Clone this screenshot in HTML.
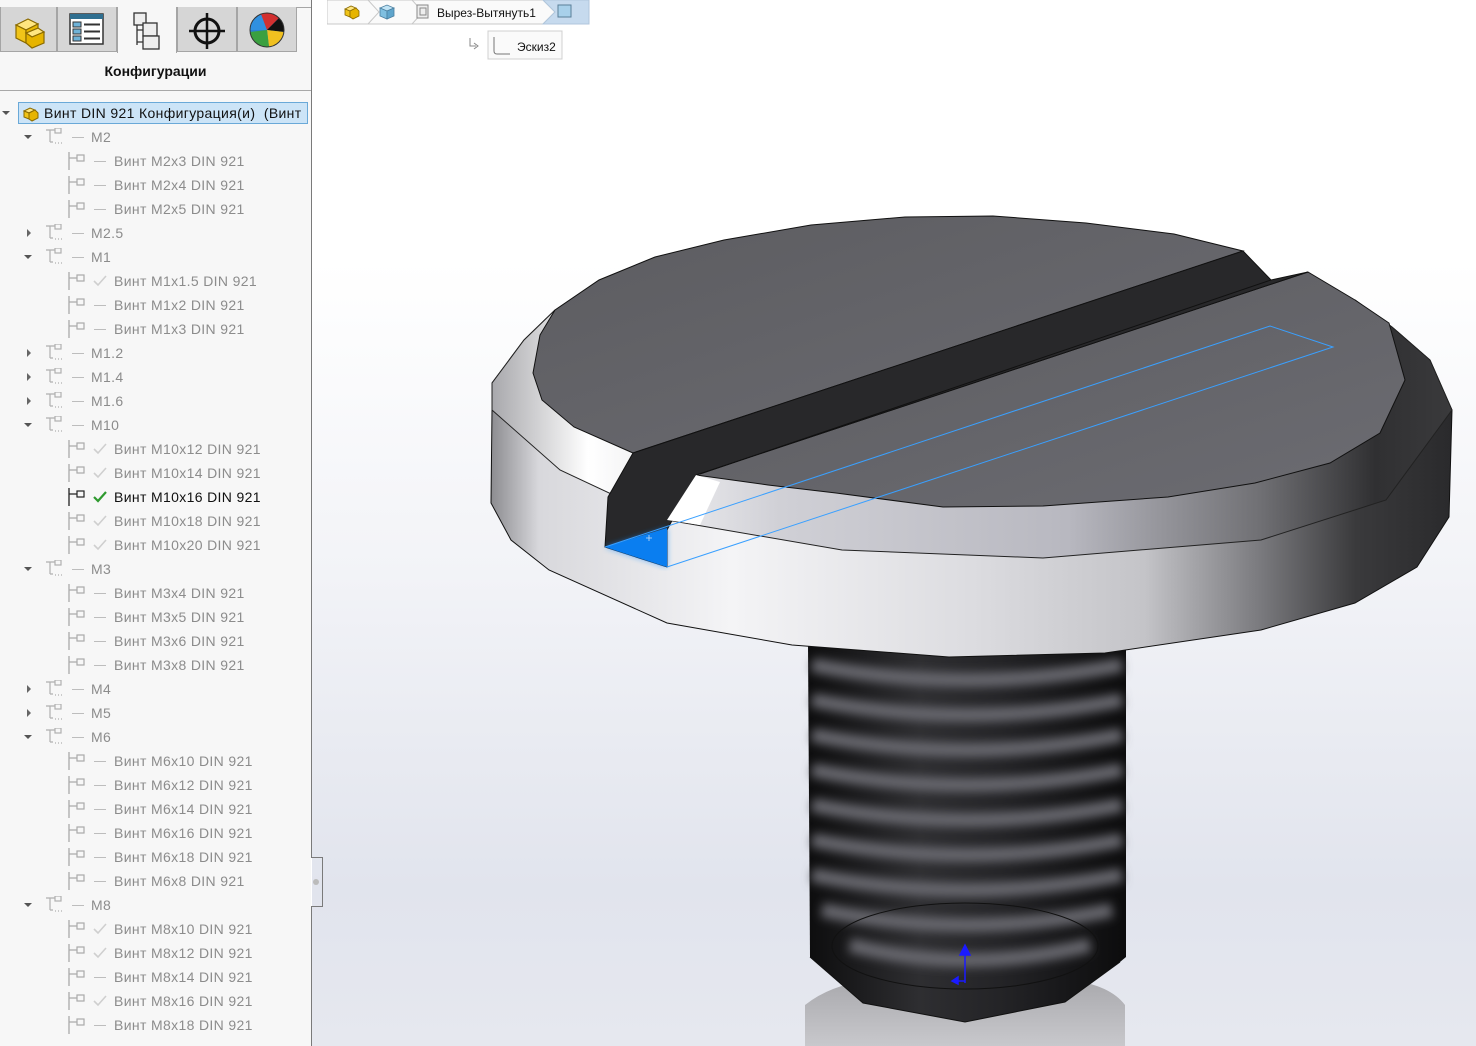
<!DOCTYPE html>
<html><head><meta charset="utf-8"><style>
*{margin:0;padding:0;box-sizing:border-box}
body{width:1476px;height:1046px;overflow:hidden;position:relative;font-family:"Liberation Sans","DejaVu Sans",sans-serif;background:#fff}
#vp{position:absolute;left:312px;top:0;width:1164px;height:1046px;background:linear-gradient(#ffffff 0%,#ffffff 25%,#f2f3f7 55%,#e1e4ed 85%,#e6e8ef 100%)}
#panel{position:absolute;left:0;top:0;width:311px;height:1046px;background:#f7f7f7}
.bl{position:absolute;background:#7a7a7a}
.tab{position:absolute;top:7px;height:45px;background:#d6d6d6;border:1px solid #a5a5a5;border-top:none}
.tab.act{background:#f7f7f7;border-bottom:none;height:46px}
.hdr{position:absolute;left:0;width:311px;top:63px;text-align:center;font-weight:bold;font-size:14px;color:#111}
.row{position:absolute;height:18px;line-height:18px;font-size:14px;color:#8c8c8c;white-space:nowrap;letter-spacing:0.35px}
.g{left:91px}.c{left:114px}
.arr{position:absolute;width:0;height:0}
.ad{border-left:4px solid transparent;border-right:4px solid transparent;border-top:4px solid #555}
.ar{border-top:4px solid transparent;border-bottom:4px solid transparent;border-left:4px solid #666}
.ic{position:absolute}
.dash{position:absolute;height:1px;width:12px;background:#bdbdbd}
</style></head><body>
<div id="vp"></div>
<div id="panel"></div>
<div class="bl" style="left:311px;top:0;width:1px;height:858px"></div>
<div class="bl" style="left:311px;top:857px;width:11px;height:1px"></div>
<div class="bl" style="left:322px;top:857px;width:1px;height:50px"></div>
<div class="bl" style="left:311px;top:906px;width:11px;height:1px"></div>
<div class="bl" style="left:311px;top:906px;width:1px;height:140px"></div>
<div style="position:absolute;left:313px;top:879px;width:6px;height:6px;border-radius:50%;background:#bbb"></div>
<div style="position:absolute;left:0;top:7px;width:311px;height:1px;background:#a5a5a5"></div>

<div class="tab" style="left:0;width:57px"></div>
<div class="tab" style="left:57px;width:60px"></div>
<div class="tab act" style="left:117px;width:60px"></div>
<div class="tab" style="left:177px;width:60px"></div>
<div class="tab" style="left:237px;width:60px"></div>
<svg style="position:absolute;left:0;top:7px" width="311" height="46">
 <g transform="translate(10,4)" stroke="#8a6a00" stroke-width="1.2">
  <polygon points="6,14 18,8 28,13 16,19" fill="#ffe680"/>
  <polygon points="6,14 16,19 16,32 6,27" fill="#f0c419"/>
  <polygon points="16,22 28,17 34,21 22,26" fill="#ffe680"/>
  <polygon points="16,19 28,13 28,17 16,22" fill="#e8b800"/>
  <polygon points="22,26 34,21 34,32 22,37 16,32 16,22" fill="#e6b400"/>
 </g>
 <g transform="translate(70,7)">
  <rect x="0" y="0" width="33" height="30" fill="#fff" stroke="#333" stroke-width="1.5"/>
  <rect x="0" y="0" width="33" height="5" fill="#2f6f90"/>
  <rect x="3" y="8" width="8" height="5" fill="#6fb3d8" stroke="#333"/><rect x="3" y="15" width="8" height="5" fill="#6fb3d8" stroke="#333"/><rect x="3" y="22" width="8" height="5" fill="#6fb3d8" stroke="#333"/>
  <path d="M14 10.5h16M14 17.5h16M14 24.5h16" stroke="#333" stroke-width="2"/>
 </g>
 <g transform="translate(133,5)" stroke="#333" stroke-width="1.3" fill="#eee">
  <rect x="1" y="1" width="12" height="12"/><path d="M4 13v20M4 18h6M4 30h6" fill="none"/>
  <rect x="10" y="11" width="14" height="13"/><rect x="10" y="24" width="16" height="13"/>
 </g>
 <g transform="translate(207,24)" stroke="#111" fill="none">
  <circle r="12" stroke-width="3"/><path d="M-18 0H18M0 -18V18" stroke-width="2.5"/>
 </g>
 <g transform="translate(267,23)">
  <circle r="17" fill="#2a7fd0"/>
  <path d="M0 0L-17 0A17 17 0 0 1 -6 -16Z" fill="#3090e0"/>
  <path d="M0 0L-6 -16A17 17 0 0 1 12 -12Z" fill="#d23030"/>
  <path d="M0 0L12 -12A17 17 0 0 1 17 2Z" fill="#111"/>
  <path d="M0 0L17 2A17 17 0 0 1 2 17Z" fill="#f0c020"/>
  <path d="M0 0L2 17A17 17 0 0 1 -17 2Z" fill="#3aa040"/>
  <circle r="17" fill="none" stroke="#333"/>
 </g>
</svg>
<div class="hdr">Конфигурации</div>
<div style="position:absolute;left:0;top:90px;width:311px;height:1px;background:#a8a8a8"></div>

<div style="position:absolute;left:18px;top:102px;width:290px;height:22px;background:#cce4f7;border:1px solid #6aa9d8"></div>
<div class="arr ad" style="left:2px;top:111px"></div>
<svg class="ic" style="left:22px;top:104px" width="18" height="18"><g stroke="#8a6a00" stroke-width="1"><polygon points="2,7 8,4 13,6 7,9" fill="#ffe680"/><polygon points="2,7 7,9 7,15 2,13" fill="#f0c419"/><polygon points="7,9 13,6 16,9 16,14 10,17 7,15" fill="#e6b400"/></g></svg>
<div class="row" style="left:44px;top:104px;color:#111">Винт DIN 921 Конфигурация(и)&nbsp; (Винт</div>

<div id="tree"></div>
<svg width="0" height="0" style="position:absolute"><defs>
<g id="gi" stroke="#b0b0b0" fill="none" stroke-width="1.2"><path d="M1 2h9M5 2v12M5 14h3"/><rect x="10" y="0" width="6" height="5"/><path d="M10 15h1M13 15h1M16 15h1"/></g>
<g id="ci"><path d="M1 0v18M1 6h8" stroke="currentColor" stroke-width="1.3" fill="none"/><rect x="9" y="3" width="7" height="6" fill="none" stroke="currentColor" stroke-width="1.2"/></g>
</defs></svg>
<script>
var R=[["g","M2",1],["c","Винт M2x3 DIN 921","-"],["c","Винт M2x4 DIN 921","-"],["c","Винт M2x5 DIN 921","-"],["g","M2.5",0],["g","M1",1],["c","Винт M1x1.5 DIN 921","v"],["c","Винт M1x2 DIN 921","-"],["c","Винт M1x3 DIN 921","-"],["g","M1.2",0],["g","M1.4",0],["g","M1.6",0],["g","M10",1],["c","Винт M10x12 DIN 921","v"],["c","Винт M10x14 DIN 921","v"],["c","Винт M10x16 DIN 921","a"],["c","Винт M10x18 DIN 921","v"],["c","Винт M10x20 DIN 921","v"],["g","M3",1],["c","Винт M3x4 DIN 921","-"],["c","Винт M3x5 DIN 921","-"],["c","Винт M3x6 DIN 921","-"],["c","Винт M3x8 DIN 921","-"],["g","M4",0],["g","M5",0],["g","M6",1],["c","Винт M6x10 DIN 921","-"],["c","Винт M6x12 DIN 921","-"],["c","Винт M6x14 DIN 921","-"],["c","Винт M6x16 DIN 921","-"],["c","Винт M6x18 DIN 921","-"],["c","Винт M6x8 DIN 921","-"],["g","M8",1],["c","Винт M8x10 DIN 921","v"],["c","Винт M8x12 DIN 921","v"],["c","Винт M8x14 DIN 921","-"],["c","Винт M8x16 DIN 921","v"],["c","Винт M8x18 DIN 921","-"]];
var h="";
R.forEach(function(r,i){var y=137+24*i;
if(r[0]=="g"){
 h+=r[2]?'<div class="arr ad" style="left:24px;top:'+(y-2)+'px"></div>':'<div class="arr ar" style="left:27px;top:'+(y-4)+'px"></div>';
 h+='<svg class="ic" style="left:45px;top:'+(y-9)+'px" width="18" height="18"><use href="#gi"/></svg>';
 h+='<div class="dash" style="left:72px;top:'+y+'px"></div>';
 h+='<div class="row g" style="top:'+(y-9)+'px">'+r[1]+'</div>';
}else{
 var a=r[2]=="a";
 h+='<svg class="ic" style="left:68px;top:'+(y-9)+'px;color:'+(a?'#222':'#aaa')+'" width="18" height="19"><use href="#ci"/></svg>';
 if(r[2]=="-")h+='<div class="dash" style="left:94px;top:'+y+'px"></div>';
 else h+='<svg class="ic" style="left:92px;top:'+(y-7)+'px" width="16" height="14"><path d="M2 7l4 4 8-9" fill="none" stroke="'+(a?'#2f9a2f':'#cfcfcf')+'" stroke-width="'+(a?2.2:1.6)+'"/></svg>';
 h+='<div class="row c" style="top:'+(y-9)+'px'+(a?';color:#111':'')+'">'+r[1]+'</div>';
}});
document.getElementById("tree").innerHTML=h;
</script>

<svg style="position:absolute;left:327px;top:0" width="265" height="62">
 <path d="M0 0V24H216L228 12L216 0Z" fill="#fafafa" stroke="#c8c8c8"/>
 <path d="M216 0L228 12L216 24H262V0Z" fill="#c6daee" stroke="#b0c6dc"/>
 <path d="M41 0l11 12-11 12M85 0l11 12-11 12" fill="none" stroke="#c8c8c8"/>
 <g transform="translate(16,3)" stroke="#8a6a00" stroke-width=".8"><polygon points="2,6 8,3 13,5 7,8" fill="#ffe680"/><polygon points="2,6 7,8 7,14 2,12" fill="#f0c419"/><polygon points="7,8 13,5 16,8 16,13 10,16 7,14" fill="#e6b400"/></g>
 <g transform="translate(52,4)" stroke="#4a7fa0" stroke-width=".8"><polygon points="1,4 8,1 15,4 8,7" fill="#bfe3f5"/><polygon points="1,4 8,7 8,15 1,12" fill="#7fbfe0"/><polygon points="8,7 15,4 15,12 8,15" fill="#5fa5cc"/></g>
 <g transform="translate(89,4)" fill="none" stroke="#888"><rect x="1" y="1" width="11" height="13" fill="#eee"/><rect x="4" y="4" width="6" height="7"/></g>
 <text x="110" y="17" font-size="12" font-family="Liberation Sans,sans-serif" fill="#111">Вырез-Вытянуть1</text>
 <rect x="231" y="5" width="13" height="12" fill="#a8d0ea" stroke="#5a7f98"/>
 <rect x="161" y="31" width="74" height="28" fill="#fafafa" stroke="#d0d0d0"/>
 <path d="M167 37v14q0 3 3 3h13" fill="none" stroke="#777"/>
 <text x="190" y="51" font-size="12" font-family="Liberation Sans,sans-serif" fill="#111">Эскиз2</text>
 <path d="M143 38v8h6M147 43l4 3-4 3" fill="none" stroke="#888"/>
</svg>

<svg style="position:absolute;left:0;top:0" width="1476" height="1046">
<defs>
 <linearGradient id="rim" x1="0" x2="1" y1="0" y2="0">
  <stop offset="0" stop-color="#8c8c90"/><stop offset=".05" stop-color="#d8d8dc"/><stop offset=".25" stop-color="#f4f4f6"/><stop offset=".5" stop-color="#dcdce0"/><stop offset=".68" stop-color="#c4c4c8"/><stop offset=".8" stop-color="#7a7a7e"/><stop offset=".9" stop-color="#3a3a3c"/><stop offset="1" stop-color="#2a2a2c"/>
 </linearGradient>
 <linearGradient id="cham" x1="0" x2="1" y1="0" y2="0">
  <stop offset="0" stop-color="#a8a8ac"/><stop offset=".1" stop-color="#fff"/><stop offset=".3" stop-color="#d0d0d6"/><stop offset=".6" stop-color="#b8b8c0"/><stop offset=".8" stop-color="#707074"/><stop offset=".92" stop-color="#303032"/><stop offset="1" stop-color="#3a3a3c"/>
 </linearGradient>
 <linearGradient id="top" x1="0" x2="1" y1="0" y2="1"><stop offset="0" stop-color="#5c5c60"/><stop offset="1" stop-color="#6c6c72"/></linearGradient>
 <linearGradient id="shank" x1="0" x2="1"><stop offset="0" stop-color="#0d0d0e"/><stop offset=".35" stop-color="#2e2e31"/><stop offset=".6" stop-color="#242427"/><stop offset="1" stop-color="#0c0c0d"/></linearGradient>
 <linearGradient id="refl" x1="0" x2="0" y1="0" y2="1"><stop offset="0" stop-color="#a9a9ad"/><stop offset="1" stop-color="#c8c8cc"/></linearGradient>
 <filter id="bl"><feGaussianBlur stdDeviation="5"/></filter>
 <filter id="gl"><feGaussianBlur stdDeviation="3"/></filter>
</defs>
<path d="M805 1005 Q830 985 870 980 L1070 980 Q1110 985 1125 1005 V1046 H805Z" fill="url(#refl)"/>
<path d="M808 645 H1126 V957 L1120 962 L1065 1002 L965 1022 L863 1003 L810 957Z" fill="url(#shank)"/>
<g stroke="#68686e" stroke-width="14" fill="none" filter="url(#bl)">
 <path d="M812 665 Q966 695 1122 665"/><path d="M812 700 Q966 730 1122 700"/><path d="M812 735 Q966 765 1122 735"/><path d="M812 770 Q966 800 1122 770"/><path d="M812 805 Q966 835 1122 805"/><path d="M812 840 Q966 870 1122 840"/><path d="M812 875 Q966 905 1122 875"/><path d="M822 910 Q966 940 1112 910"/><path d="M850 945 Q966 975 1090 945"/>
</g>
<path d="M810 957 L863 1003 L965 1022 L1065 1002 L1120 962" fill="none" stroke="#111"/>
<ellipse cx="965" cy="946" rx="133" ry="43" fill="none" stroke="#111"/>
<path d="M965 947V983M960 955l5-10 5 10z" stroke="#1a1aff" fill="#1a1aff" stroke-width="1.5"/>
<path d="M965 981h-12M958 977l-6 4 6 3z" stroke="#1a1aff" fill="#1a1aff" stroke-width="1.5"/>
<path d="M492 383 L524 340 L555 310 L1355 300 L1392 327 L1430 360 L1452 410 L1449 517 L1417 567 L1355 603 L1261 630 L1105 653 L949 657 L792 645 L667 623 L549 570 L511 540 L491 503 L492 410Z" fill="url(#rim)" stroke="#111"/>
<path d="M492 383 L524 340 L555 310 L1355 300 L1392 327 L1430 360 L1452 410 L1386 500 L1261 540 L1043 558 L842 550 L667 520 L560 470 L492 410Z" fill="url(#cham)" stroke="#222"/>
<path d="M633 453 L574 427 L542 400 L533 373 L540 335 L555 310 L599 280 L655 257 L724 240 L811 225 L905 217 L993 216 L1086 223 L1174 234 L1243 251Z" fill="url(#top)" stroke="#111"/>
<path d="M1308 272 L1355 300 L1389 323 L1405 380 L1380 433 L1330 463 L1255 483 L1168 497 L1043 506 L943 507 L836 493 L768 485 L696 475Z" fill="url(#top)" stroke="#111"/>
<path d="M633 453 L1243 251 L1271 280 L1308 272 L696 475 L667 530 L667 567 L605 547 L608 497Z" fill="#28282a" stroke="#111"/>
<path d="M1271 280 L700 474" fill="none" stroke="#111"/>
<path d="M667 520 L696 475 L720 482 L700 525Z" fill="#fff"/>
<path d="M605 547 L667 528 L667 567Z" fill="#1a8cff" filter="url(#gl)" opacity=".7"/>
<path d="M605 547 L667 528 L667 567Z" fill="#0a7ef0"/>
<path d="M667 567 L1333 347 L1270 326 L605 547" fill="none" stroke="#3aa0ff" stroke-width="1"/>
<path d="M649 535v6M646 538h6" stroke="#cde" stroke-width=".8"/>
</svg>
</body></html>
